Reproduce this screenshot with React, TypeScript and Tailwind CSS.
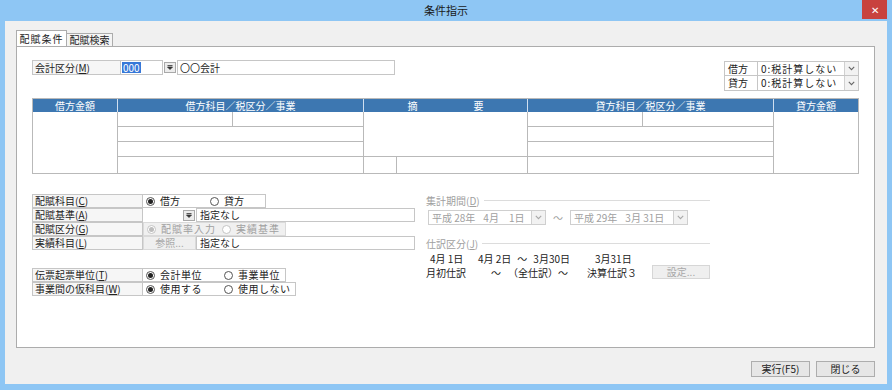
import React from 'react';

const font = { fontFamily: '"Noto Sans CJK JP", "Noto Sans", sans-serif' };

function Radio({ on, label, disabled }: { on?: boolean; label: string; disabled?: boolean }) {
  return (
    <span className={`flex items-center gap-[5px] whitespace-nowrap ${disabled ? 'text-[#a0a0a0]' : 'text-[#222]'}`}>
      <span className={`w-[9px] h-[9px] rounded-full border flex items-center justify-center bg-white ${disabled ? 'border-[#c4c4c4]' : 'border-[#555]'}`}>
        {on && <span className={`w-[5px] h-[5px] rounded-full ${disabled ? 'bg-[#bdbdbd]' : 'bg-[#222]'}`} />}
      </span>
      {label}
    </span>
  );
}

function Label({ text, u, w = 'w-[111px]' }: { text: string; u: string; w?: string }) {
  return (
    <div className={`${w} h-full border border-[#c6c6c6] bg-[#f6f6f6] px-[2px] flex items-center shrink-0 whitespace-nowrap`}>
      {text}(<span className="underline">{u}</span>)
    </div>
  );
}

function DropBtn() {
  return (
    <span className="w-[12px] h-[11px] border border-[#a9a9a9] bg-[#ececec] flex items-center justify-center">
      <svg width="6" height="5" viewBox="0 0 6 5">
        <path d="M0.5 0.5 H5.5 M0.5 2 L3 4.5 L5.5 2 Z" fill="#333" stroke="#333" strokeWidth="0.8" />
      </svg>
    </span>
  );
}

function Chevron({ muted }: { muted?: boolean }) {
  return (
    <span className="w-[14px] h-full border-l border-[#d0d0d0] bg-[#f2f2f2] flex items-center justify-center shrink-0">
      <svg width="7" height="5" viewBox="0 0 7 5">
        <path d="M0.8 0.8 L3.5 3.6 L6.2 0.8" fill="none" stroke={muted ? '#a8a8a8' : '#666'} strokeWidth="1.1" />
      </svg>
    </span>
  );
}

export default function App() {
  const cell = 'border-[#b9b9b9]';
  return (
    <div className="w-[892px] h-[390px] bg-[#8ec6f4] flex flex-col text-[10px] leading-none text-[#222]" style={font}>
      <div className="h-[21px] relative flex items-center justify-center text-[11px] text-[#1a1a1a]">
        条件指示
        <div className="absolute right-[5px] top-0 w-[25px] h-[19px] bg-[#c8423e] text-white text-[10px] flex items-center justify-center">✕</div>
      </div>
      <div className="flex-1 mx-[5px] mb-[6px] bg-[#f0f0f0] pl-[11px] pr-[12px] pt-[9px] flex flex-col">
        <div className="h-[16px] flex items-end">
          <div className="h-[16px] w-[51px] bg-white border border-b-0 border-[#acacac] flex items-center justify-center tracking-[1px]">配賦条件</div>
          <div className="h-[13px] w-[46px] bg-[#f4f4f4] border border-l-0 border-b-0 border-[#acacac] flex items-center justify-center">配賦検索</div>
        </div>
        <div className="h-[302px] bg-white border border-[#acacac] px-[15px] pt-[13px]">
          <div className="flex justify-between items-start">
            <div className="flex h-[15px] items-stretch">
              <Label text="会計区分" u="M" w="w-[89px]" />
              <div className="w-[42px] border border-l-0 border-[#c6c6c6] flex items-center pl-[1px]">
                <span className="bg-[#3778d8] text-white px-[1px] h-[11px] flex items-center">000</span>
              </div>
              <div className="w-[14px] flex items-center justify-center"><DropBtn /></div>
              <div className="w-[218px] border border-[#c6c6c6] flex items-center px-[2px]">〇〇会計</div>
            </div>
            <div className="mt-[1px] w-[135px]">
              {['借方', '貸方'].map((t, i) => (
                <div key={t} className={`flex h-[15px] border border-[#c6c6c6] ${i ? 'border-t-0' : ''}`}>
                  <div className="w-[33px] border-r border-[#c6c6c6] flex items-center px-[3px]">{t}</div>
                  <div className="flex-1 flex items-center px-[3px] tracking-[1px] whitespace-nowrap">0:税計算しない</div>
                  <Chevron />
                </div>
              ))}
            </div>
          </div>

          <div className="mt-[7px] border border-[#b9b9b9]">
            <div className="flex h-[13px] bg-[#3d77b1] text-white">
              <div className="w-[85px] border-r border-[#d0dff0] flex items-center justify-center">借方金額</div>
              <div className="w-[246px] border-r border-[#d0dff0] flex items-center justify-center">借方科目／税区分／事業</div>
              <div className="w-[164px] border-r border-[#d0dff0] flex items-center justify-center gap-[56px]"><span>摘</span><span>要</span></div>
              <div className="w-[246px] border-r border-[#d0dff0] flex items-center justify-center">貸方科目／税区分／事業</div>
              <div className="flex-1 flex items-center justify-center">貸方金額</div>
            </div>
            <div className="flex h-[61px]">
              <div className={`w-[85px] border-r ${cell}`} />
              <div className={`w-[246px] border-r ${cell} flex flex-col`}>
                <div className={`h-[15px] border-b ${cell} flex`}><div className={`w-[115px] border-r ${cell}`} /></div>
                <div className={`h-[15px] border-b ${cell}`} />
                <div className={`h-[15px] border-b ${cell}`} />
                <div className="flex-1" />
              </div>
              <div className={`w-[164px] border-r ${cell} flex flex-col`}>
                <div className={`h-[45px] border-b ${cell}`} />
                <div className="flex-1 flex"><div className={`w-[33px] border-r ${cell}`} /></div>
              </div>
              <div className={`w-[246px] border-r ${cell} flex flex-col`}>
                <div className={`h-[15px] border-b ${cell} flex`}><div className={`w-[115px] border-r ${cell}`} /></div>
                <div className={`h-[15px] border-b ${cell}`} />
                <div className={`h-[15px] border-b ${cell}`} />
                <div className="flex-1" />
              </div>
              <div className="flex-1" />
            </div>
          </div>

          <div className="mt-[20px] flex">
            <div className="w-[383px]">
              <div className="flex h-[14px]">
                <Label text="配賦科目" u="C" />
                <div className="w-[123px] border border-l-0 border-[#c6c6c6] flex items-center gap-[30px] pl-[3px]">
                  <Radio on label="借方" />
                  <Radio label="貸方" />
                </div>
              </div>
              <div className="flex h-[14px]">
                <Label text="配賦基準" u="A" />
                <div className="w-[39px]" />
                <div className="w-[14px] flex items-center justify-center"><DropBtn /></div>
                <div className="flex-1 border border-[#c6c6c6] flex items-center px-[3px]">指定なし</div>
              </div>
              <div className="flex h-[14px]">
                <Label text="配賦区分" u="G" />
                <div className="w-[143px] bg-[#f0f0f0] border border-[#dadada] flex items-center gap-[6px] pl-[3px] tracking-[1px]">
                  <Radio on disabled label="配賦率入力" />
                  <Radio disabled label="実績基準" />
                </div>
              </div>
              <div className="flex h-[14px]">
                <Label text="実績科目" u="L" />
                <div className="w-[53px] bg-[#efefef] border border-[#dadada] text-[#a8a8a8] flex items-center justify-center">参照...</div>
                <div className="flex-1 border border-[#c6c6c6] flex items-center px-[3px]">指定なし</div>
              </div>
              <div className="h-[18px]" />
              <div className="flex h-[14px]">
                <Label text="伝票起票単位" u="T" />
                <div className="w-[143px] border border-l-0 border-[#c6c6c6] flex items-center gap-[22px] pl-[3px] tracking-[0.5px]">
                  <Radio on label="会計単位" />
                  <Radio label="事業単位" />
                </div>
              </div>
              <div className="flex h-[14px]">
                <Label text="事業間の仮科目" u="W" />
                <div className="w-[153px] border border-l-0 border-[#c6c6c6] flex items-center gap-[22px] pl-[3px] tracking-[0.5px]">
                  <Radio on label="使用する" />
                  <Radio label="使用しない" />
                </div>
              </div>
            </div>

            <div className="ml-[11px] w-[284px] text-[#a0a0a0]">
              <div className="flex items-center gap-[4px] h-[11px] mt-[1px]">
                <span className="whitespace-nowrap">集計期間(<span className="underline">D</span>)</span>
                <span className="flex-1 h-px bg-[#dcdcdc]" />
              </div>
              <div className="flex items-center mt-[4px] ml-[2px] h-[15px]">
                <div className="w-[118px] h-full border border-[#cfcfcf] flex">
                  <span className="flex-1 flex items-center px-[3px] gap-[8px] whitespace-nowrap"><span>平成 28年</span><span>4月　1日</span></span>
                  <Chevron muted />
                </div>
                <span className="w-[24px] text-center">～</span>
                <div className="w-[118px] h-full border border-[#cfcfcf] flex">
                  <span className="flex-1 flex items-center px-[3px] gap-[8px] whitespace-nowrap"><span>平成 29年</span><span>3月 31日</span></span>
                  <Chevron muted />
                </div>
              </div>
              <div className="flex items-center gap-[4px] h-[11px] mt-[13px]">
                <span className="whitespace-nowrap">仕訳区分(<span className="underline">J</span>)</span>
                <span className="flex-1 h-px bg-[#dcdcdc]" />
              </div>
              <div className="flex items-end text-[#222] whitespace-nowrap mt-[3px]">
                <div className="flex flex-col leading-[14px]">
                  <div className="flex h-[14px]">
                    <span className="w-[52px] pl-[4px]">4月 1日</span>
                    <span className="w-[117px] flex gap-[6px]"><span>4月 2日</span><span>～</span><span>3月30日</span></span>
                    <span className="w-[57px]">3月31日</span>
                  </div>
                  <div className="flex h-[14px]">
                    <span className="w-[65px]">月初仕訳</span>
                    <span className="w-[17px]">～</span>
                    <span className="w-[50px]">（全仕訳）</span>
                    <span className="w-[29px]">～</span>
                    <span className="w-[65px]">決算仕訳３</span>
                  </div>
                </div>
                <div className="w-[58px] h-[14px] mb-[1px] border border-[#d6d6d6] bg-[#efefef] text-[#a8a8a8] flex items-center justify-center">設定...</div>
              </div>
            </div>
          </div>
        </div>
        <div className="flex justify-end gap-[6px] mt-[13px]">
          <div className="w-[59px] h-[16px] border border-[#adadad] bg-[#e6e6e6] flex items-center justify-center">実行(F5)</div>
          <div className="w-[59px] h-[16px] border border-[#adadad] bg-[#e6e6e6] flex items-center justify-center">閉じる</div>
        </div>
      </div>
    </div>
  );
}
